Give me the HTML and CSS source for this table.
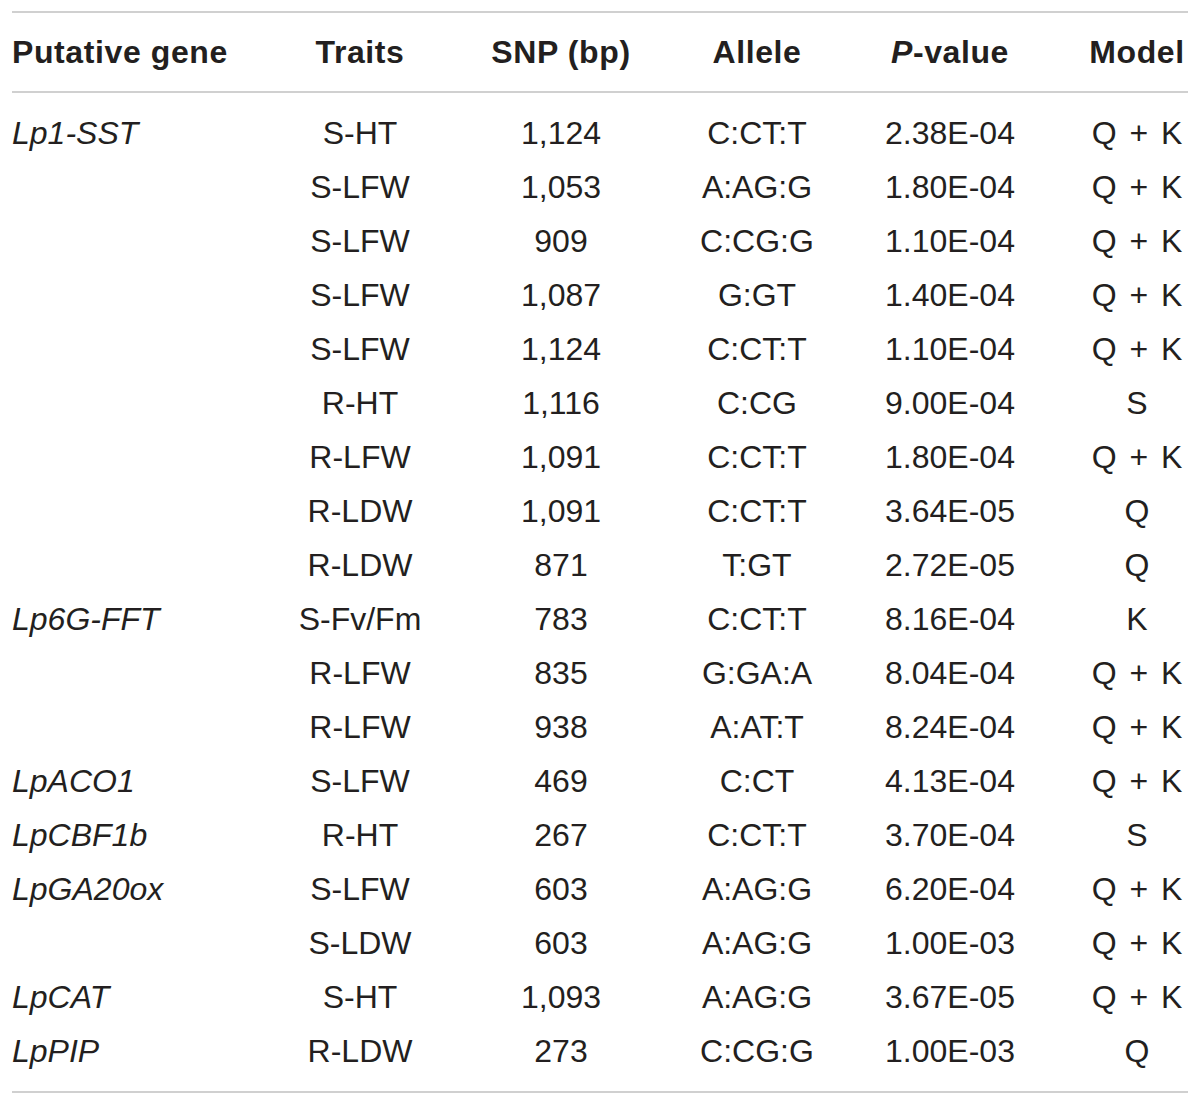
FILE: index.html
```html
<!DOCTYPE html>
<html>
	<head>
		<meta charset="utf-8" />
		<title>Putative genes</title>
		<link rel="stylesheet" href="styles.css">
	</head>
	<body>
		<table class="snp-table">
			<colgroup>
				<col class="c-gene">
				<col class="c-trait">
				<col class="c-snp">
				<col class="c-allele">
				<col class="c-p">
				<col class="c-model">
			</colgroup>
			<thead>
				<tr>
					<th class="gene">Putative gene</th>
					<th>Traits</th>
					<th>SNP (bp)</th>
					<th>Allele</th>
					<th class="pval"><i>P</i>-value</th>
					<th>Model</th>
				</tr>
			</thead>
			<tbody>
				<tr><td class="gene">Lp1-SST</td><td>S-HT</td><td>1,124</td><td>C:CT:T</td><td class="pval">2.38E-04</td><td class="model">Q + K</td></tr>
				<tr><td class="gene"></td><td>S-LFW</td><td>1,053</td><td>A:AG:G</td><td class="pval">1.80E-04</td><td class="model">Q + K</td></tr>
				<tr><td class="gene"></td><td>S-LFW</td><td>909</td><td>C:CG:G</td><td class="pval">1.10E-04</td><td class="model">Q + K</td></tr>
				<tr><td class="gene"></td><td>S-LFW</td><td>1,087</td><td>G:GT</td><td class="pval">1.40E-04</td><td class="model">Q + K</td></tr>
				<tr><td class="gene"></td><td>S-LFW</td><td>1,124</td><td>C:CT:T</td><td class="pval">1.10E-04</td><td class="model">Q + K</td></tr>
				<tr><td class="gene"></td><td>R-HT</td><td>1,116</td><td>C:CG</td><td class="pval">9.00E-04</td><td class="model">S</td></tr>
				<tr><td class="gene"></td><td>R-LFW</td><td>1,091</td><td>C:CT:T</td><td class="pval">1.80E-04</td><td class="model">Q + K</td></tr>
				<tr><td class="gene"></td><td>R-LDW</td><td>1,091</td><td>C:CT:T</td><td class="pval">3.64E-05</td><td class="model">Q</td></tr>
				<tr><td class="gene"></td><td>R-LDW</td><td>871</td><td>T:GT</td><td class="pval">2.72E-05</td><td class="model">Q</td></tr>
				<tr><td class="gene">Lp6G-FFT</td><td>S-Fv/Fm</td><td>783</td><td>C:CT:T</td><td class="pval">8.16E-04</td><td class="model">K</td></tr>
				<tr><td class="gene"></td><td>R-LFW</td><td>835</td><td>G:GA:A</td><td class="pval">8.04E-04</td><td class="model">Q + K</td></tr>
				<tr><td class="gene"></td><td>R-LFW</td><td>938</td><td>A:AT:T</td><td class="pval">8.24E-04</td><td class="model">Q + K</td></tr>
				<tr><td class="gene">LpACO1</td><td>S-LFW</td><td>469</td><td>C:CT</td><td class="pval">4.13E-04</td><td class="model">Q + K</td></tr>
				<tr><td class="gene">LpCBF1b</td><td>R-HT</td><td>267</td><td>C:CT:T</td><td class="pval">3.70E-04</td><td class="model">S</td></tr>
				<tr><td class="gene">LpGA20ox</td><td>S-LFW</td><td>603</td><td>A:AG:G</td><td class="pval">6.20E-04</td><td class="model">Q + K</td></tr>
				<tr><td class="gene"></td><td>S-LDW</td><td>603</td><td>A:AG:G</td><td class="pval">1.00E-03</td><td class="model">Q + K</td></tr>
				<tr><td class="gene">LpCAT</td><td>S-HT</td><td>1,093</td><td>A:AG:G</td><td class="pval">3.67E-05</td><td class="model">Q + K</td></tr>
				<tr><td class="gene">LpPIP</td><td>R-LDW</td><td>273</td><td>C:CG:G</td><td class="pval">1.00E-03</td><td class="model">Q</td></tr>
			</tbody>
		</table>
	</body>
</html>
```

FILE: styles.css
```css
* {
	padding: 0px;
	margin: 0px;
	box-sizing: border-box;
}

body {
	background-color: #fff;
	color: #231f20;
	font-family: "Liberation Sans", Arial, sans-serif;
	font-size: 32px;
	padding: 11px 0 0 12px;
}

.snp-table {
	width: 1176px;
	table-layout: fixed;
	border-collapse: collapse;
	border-top: 2px solid #d0d0d0;
	border-bottom: 2px solid #d0d0d0;
}

.c-gene { width: 248px; }
.c-trait { width: 200px; }
.c-snp { width: 202px; }
.c-allele { width: 190px; }
.c-p { width: 234px; }
.c-model { width: 102px; }

.snp-table th,
.snp-table td {
	text-align: center;
	white-space: nowrap;
	font-weight: normal;
}

.snp-table th {
	height: 80px;
	font-weight: bold;
	letter-spacing: 0.6px;
	border-bottom: 2px solid #d0d0d0;
	padding-top: 0px;
}

.snp-table td {
	height: 54px;
	line-height: 54px;
}

.snp-table tbody tr:first-child td {
	height: 67px;
	padding-top: 13px;
}

.snp-table tbody tr:last-child td {
	height: 67px;
	padding-bottom: 13px;
}

.snp-table .gene {
	text-align: left;
}

.snp-table td.gene {
	font-style: italic;
}

.snp-table .pval {
	padding-right: 38px;
}

.snp-table .model {
	word-spacing: 4px;
}
```
